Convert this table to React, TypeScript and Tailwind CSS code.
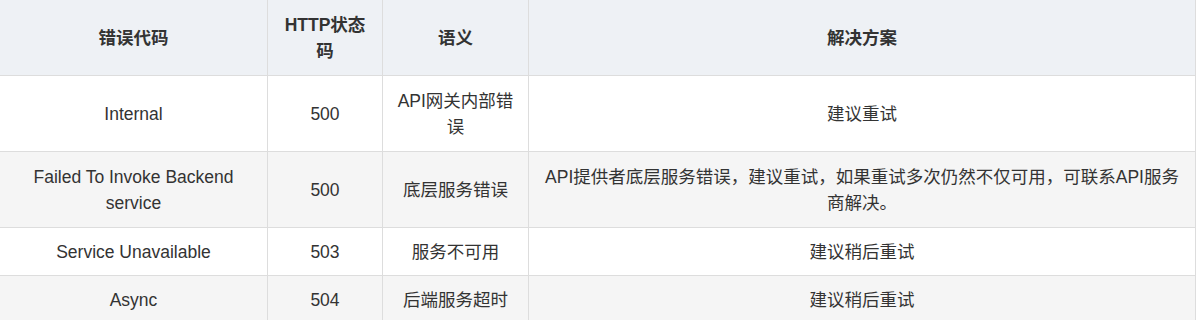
import React from "react";

const rows: { code: React.ReactNode; status: string; meaning: string; fix: React.ReactNode; h: string; bg: string }[] = [
  { code: "Internal", status: "500", meaning: "API网关内部错误", fix: "建议重试", h: "h-[76px]", bg: "bg-white" },
  {
    code: "Failed To Invoke Backend service",
    status: "500",
    meaning: "底层服务错误",
    fix: (
      <>
        API提供者底层服务错误，建议重试，如果重试多次仍然不仅可用，可联系API服务
        <br />
        商解决。
      </>
    ),
    h: "h-[76px]",
    bg: "bg-[#f5f5f5]",
  },
  { code: "Service Unavailable", status: "503", meaning: "服务不可用", fix: "建议稍后重试", h: "h-[48px]", bg: "bg-white" },
  { code: "Async", status: "504", meaning: "后端服务超时", fix: "建议稍后重试", h: "h-[48px]", bg: "bg-[#f5f5f5]" },
];

export default function App() {
  const cell = "border-r border-b border-[#dddddd] px-[10px] py-0 text-center align-middle";
  return (
    <div className="w-[1196px] bg-white font-['Liberation_Sans','Noto_Sans_CJK_SC',sans-serif] text-[17.5px] leading-[26px] text-[#333333]">
      <table className="w-[1196px] table-fixed border-separate border-spacing-0">
        <colgroup>
          <col className="w-[268px]" />
          <col className="w-[115px]" />
          <col className="w-[146px]" />
          <col className="w-[667px]" />
        </colgroup>
        <thead>
          <tr className="bg-[#eef1f5]">
            <th className={`${cell} h-[76px] font-bold`}>错误代码</th>
            <th className={`${cell} h-[76px] font-bold`}>HTTP状态码</th>
            <th className={`${cell} h-[76px] font-bold`}>语义</th>
            <th className={`${cell} h-[76px] font-bold`}>解决方案</th>
          </tr>
        </thead>
        <tbody>
          {rows.map((r, i) => (
            <tr key={i} className={r.bg}>
              <td className={`${cell} ${r.h}`}>{r.code}</td>
              <td className={`${cell} ${r.h}`}>{r.status}</td>
              <td className={`${cell} ${r.h}`}>{r.meaning}</td>
              <td className={`${cell} ${r.h}`}>{r.fix}</td>
            </tr>
          ))}
        </tbody>
      </table>
    </div>
  );
}
